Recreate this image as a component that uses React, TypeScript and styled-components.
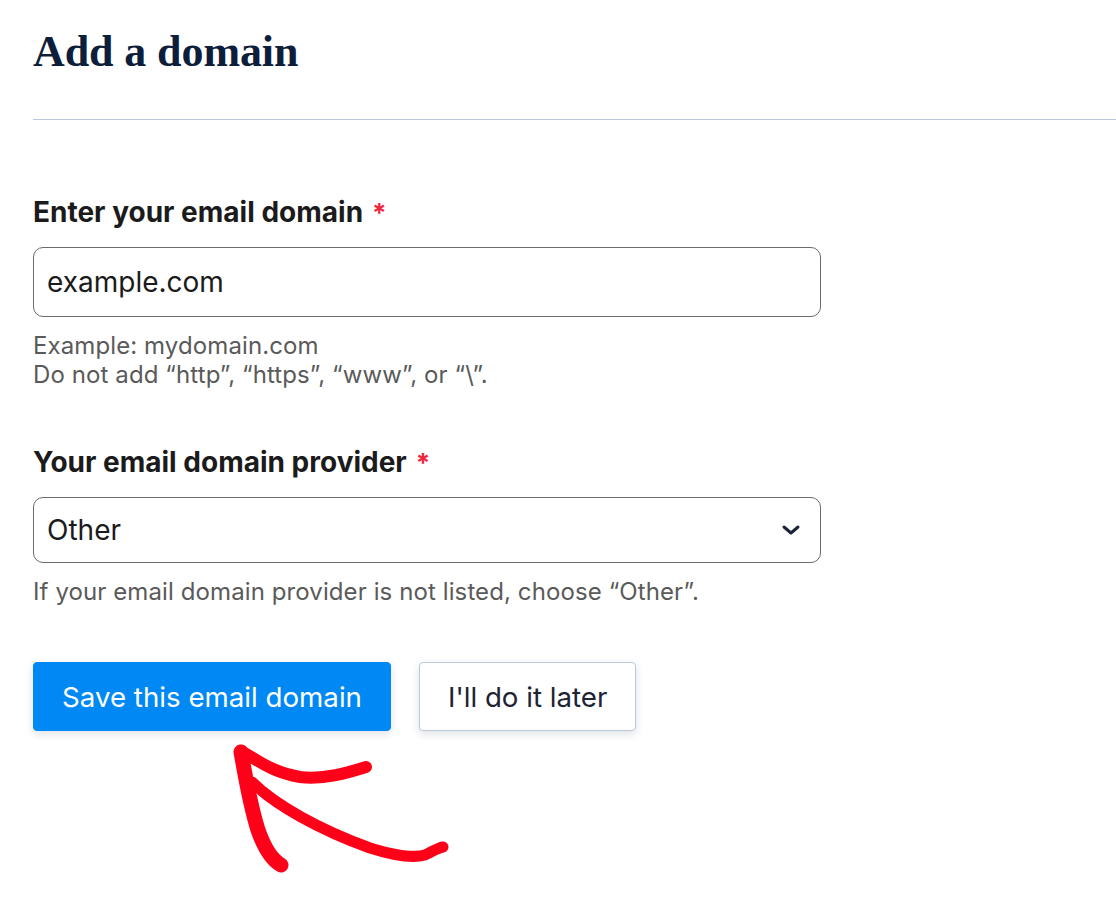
import React from "react";
import styled, { createGlobalStyle } from "styled-components";

const Global = createGlobalStyle`
  html, body { margin: 0; padding: 0; background: #ffffff; }
  body { font-family: Inter, "Noto Sans", sans-serif; }
  * { box-sizing: border-box; }
`;

const Page = styled.div`
  width: 1116px;
  height: 905px;
  padding-left: 33px;
  overflow: hidden;
  position: relative;
`;

const Title = styled.h1`
  margin: 0;
  padding-top: 26px;
  font-family: "Liberation Serif", "Times New Roman", serif;
  font-weight: 700;
  font-size: 44px;
  line-height: 52px;
  color: #0d1e3b;
  letter-spacing: -0.1px;
`;

const Divider = styled.hr`
  margin: 41px 0 0 0;
  border: none;
  border-top: 1px solid #b9c9da;
  height: 0;
`;

const Form = styled.form`
  width: 788px;
  padding-top: 75px;
  display: flex;
  flex-direction: column;
`;

const Field = styled.div<{ $gap?: number }>`
  display: flex;
  flex-direction: column;
  margin-bottom: ${(p) => p.$gap ?? 0}px;
`;

const Label = styled.label`
  font-size: 28px;
  font-weight: 700;
  line-height: 34px;
  color: #1b1b1b;
  margin-bottom: 17px;
`;

const Star = styled.span`
  color: #f0253f;
  margin-left: 9px;
  font-size: 26px;
`;

const Box = styled.div<{ $h: number }>`
  height: ${(p) => p.$h}px;
  border: 1px solid #6b6b6b;
  border-radius: 10px;
  display: flex;
  align-items: center;
  justify-content: space-between;
  padding: 0 19px 0 13px;
  font-size: 28px;
  color: #1b1b1b;
`;

const Help = styled.p`
  margin: 14px 0 0 0;
  font-size: 24px;
  line-height: 29px;
  color: #5a5a5a;
  white-space: nowrap;
  letter-spacing: 0.1px;
`;

const Actions = styled.div`
  display: flex;
  gap: 28px;
  margin-top: 56px;
`;

const Button = styled.button<{ $primary?: boolean }>`
  height: 69px;
  padding: 0 28px;
  border-radius: 4px;
  font-family: Inter, sans-serif;
  font-size: 27.7px;
  cursor: pointer;
  background: ${(p) => (p.$primary ? "#0089f5" : "#ffffff")};
  color: ${(p) => (p.$primary ? "#ffffff" : "#1d2433")};
  border: 1px solid ${(p) => (p.$primary ? "#0089f5" : "#b9c9da")};
  box-shadow: 0 3px 8px rgba(20, 40, 70, 0.14);
`;

const Arrow = styled.svg`
  position: absolute;
  left: 0;
  top: 0;
  pointer-events: none;
`;

export default function App() {
  return (
    <>
      <Global />
      <Page>
        <Title>Add a domain</Title>
        <Divider />
        <Form onSubmit={(e) => e.preventDefault()}>
          <Field $gap={56}>
            <Label>
              Enter your email domain<Star>*</Star>
            </Label>
            <Box $h={70}>example.com</Box>
            <Help>
              Example: mydomain.com
              <br />
              Do not add “http”, “https”, “www”, or “\”.
            </Help>
          </Field>
          <Field>
            <Label>
              Your email domain provider<Star>*</Star>
            </Label>
            <Box $h={66}>
              <span>Other</span>
              <svg width="20" height="14" viewBox="0 0 20 14">
                <path d="M3 4 L10 10 L17 4" fill="none" stroke="#1b2436" strokeWidth="3" strokeLinecap="round" strokeLinejoin="round" />
              </svg>
            </Box>
            <Help>If your email domain provider is not listed, choose “Other”.</Help>
          </Field>
          <Actions>
            <Button $primary type="submit">Save this email domain</Button>
            <Button type="button">I'll do it later</Button>
          </Actions>
        </Form>
        <Arrow width="1116" height="905" viewBox="0 0 1116 905">
          <g fill="none" stroke="#ff0019" strokeLinecap="round" strokeLinejoin="round">
            <path d="M241 751 C 255 758, 270 772, 300 777 C 325 780, 350 772, 366 767" strokeWidth="12" />
            <path d="M241 752 C 246 780, 250 805, 258 830 C 265 850, 272 860, 281 865" strokeWidth="15" />
            <path d="M252 782 C 275 805, 320 830, 370 848 C 395 856, 415 858, 425 855 C 432 852, 437 848, 443 847" strokeWidth="11" />
          </g>
        </Arrow>
      </Page>
    </>
  );
}
